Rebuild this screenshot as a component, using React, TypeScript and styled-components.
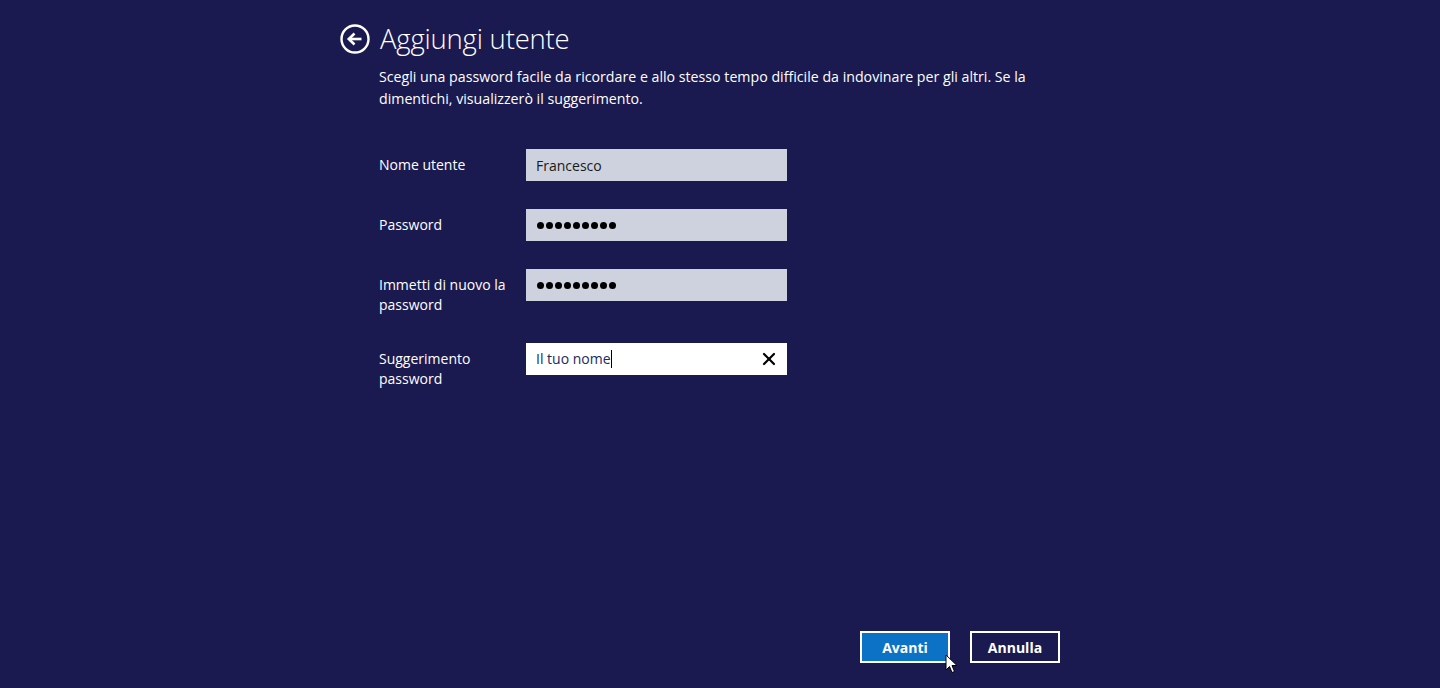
import { FC } from "react";
import styled, { createGlobalStyle } from "styled-components";
import { X } from "lucide-react";

const GlobalStyle = createGlobalStyle`
  html, body {
    margin: 0;
    padding: 0;
    background: #1b1a50;
  }
  body {
    font-family: "Open Sans", "Noto Sans", "Liberation Sans", sans-serif;
    color: #ffffff;
  }
`;

const Page = styled.div`
  height: 688px;
  box-sizing: border-box;
  display: flex;
  flex-direction: column;
  padding: 22px 0 25px 340px;
  background: #1b1a50;
`;

const Header = styled.div`
  display: flex;
  flex-direction: row;
  align-items: center;
  gap: 10px;
  height: 34px;
`;

const BackButton = styled.div`
  width: 30px;
  height: 30px;
  display: flex;
  align-items: center;
  justify-content: center;
`;

const Title = styled.h1`
  margin: 0;
  font-size: 27.5px;
  font-weight: 300;
  letter-spacing: -0.2px;
  line-height: 34px;
`;

const Body = styled.div`
  padding-left: 39px;
  flex: 1;
  display: flex;
  flex-direction: column;
`;

const Description = styled.p`
  margin: 10px 0 0;
  font-size: 14.2px;
  line-height: 22px;
  width: 700px;
`;

const Form = styled.div`
  margin-top: 39px;
  display: flex;
  flex-direction: column;
  gap: 28px;
`;

const Row = styled.div`
  display: grid;
  grid-template-columns: 147px 261px;
  align-items: start;
`;

const Label = styled.div`
  padding-top: 6px;
  font-size: 14px;
  line-height: 20px;
  width: 140px;
`;

const Field = styled.div<{ $active?: boolean }>`
  height: 32px;
  box-sizing: border-box;
  display: flex;
  align-items: center;
  padding: 0 8px 0 10px;
  background: ${(p) => (p.$active ? "#ffffff" : "#cdd2de")};
  color: #1a1a1a;
  font-size: 14px;
`;

const Dots = styled.div`
  display: flex;
  gap: 2px;
  padding-left: 1px;
`;

const Dot = styled.span`
  width: 7px;
  height: 7px;
  border-radius: 50%;
  background: #000000;
`;

const HintText = styled.span`
  color: #1b2a60;
  border-right: 1px solid #000000;
  line-height: 18px;
`;

const ClearIcon = styled.div`
  margin-left: auto;
  display: flex;
  color: #000000;
`;

const Footer = styled.div`
  display: flex;
  flex-direction: row;
  gap: 20px;
  padding-left: 520px;
`;

const Button = styled.div<{ $primary?: boolean }>`
  position: relative;
  width: 90px;
  height: 32px;
  box-sizing: border-box;
  border: 2px solid #ffffff;
  background: ${(p) => (p.$primary ? "#0b72c6" : "#1b1a50")};
  display: flex;
  align-items: center;
  justify-content: center;
  font-size: 14px;
  font-weight: 700;
  color: #ffffff;
`;

const Cursor = styled.svg`
  position: absolute;
  left: 83px;
  top: 21px;
`;

const PasswordDots: FC<{ count: number }> = ({ count }) => (
  <Dots>
    {Array.from({ length: count }).map((_, i) => (
      <Dot key={i} />
    ))}
  </Dots>
);

const App: FC = () => {
  return (
    <>
      <GlobalStyle />
      <Page>
        <Header>
          <BackButton>
            <svg width="30" height="30" viewBox="0 0 30 30">
              <circle cx="15" cy="15" r="13.5" fill="none" stroke="#fff" strokeWidth="2.4" />
              <path d="M21.5 15H9.5" stroke="#fff" strokeWidth="2.6" />
              <path d="M14.5 9.5L8.8 15L14.5 20.5" fill="none" stroke="#fff" strokeWidth="2.6" />
            </svg>
          </BackButton>
          <Title>Aggiungi utente</Title>
        </Header>
        <Body>
          <Description>
            Scegli una password facile da ricordare e allo stesso tempo difficile da indovinare per gli altri. Se la
            <br />
            dimentichi, visualizzerò il suggerimento.
          </Description>
          <Form>
            <Row>
              <Label>Nome utente</Label>
              <Field>Francesco</Field>
            </Row>
            <Row>
              <Label>Password</Label>
              <Field>
                <PasswordDots count={9} />
              </Field>
            </Row>
            <Row>
              <Label>Immetti di nuovo la password</Label>
              <Field>
                <PasswordDots count={9} />
              </Field>
            </Row>
            <Row>
              <Label>Suggerimento password</Label>
              <Field $active>
                <HintText>Il tuo nome</HintText>
                <ClearIcon>
                  <X size={20} strokeWidth={2.6} />
                </ClearIcon>
              </Field>
            </Row>
          </Form>
        </Body>
        <Footer>
          <Button $primary>
            Avanti
            <Cursor width="13" height="20" viewBox="0 0 13 20">
              <path d="M1 1V16L4.5 12.5L7 18.5L9.5 17.5L7 11.5H12Z" fill="#fff" stroke="#000" strokeWidth="1" />
            </Cursor>
          </Button>
          <Button>Annulla</Button>
        </Footer>
      </Page>
    </>
  );
};

export default App;
